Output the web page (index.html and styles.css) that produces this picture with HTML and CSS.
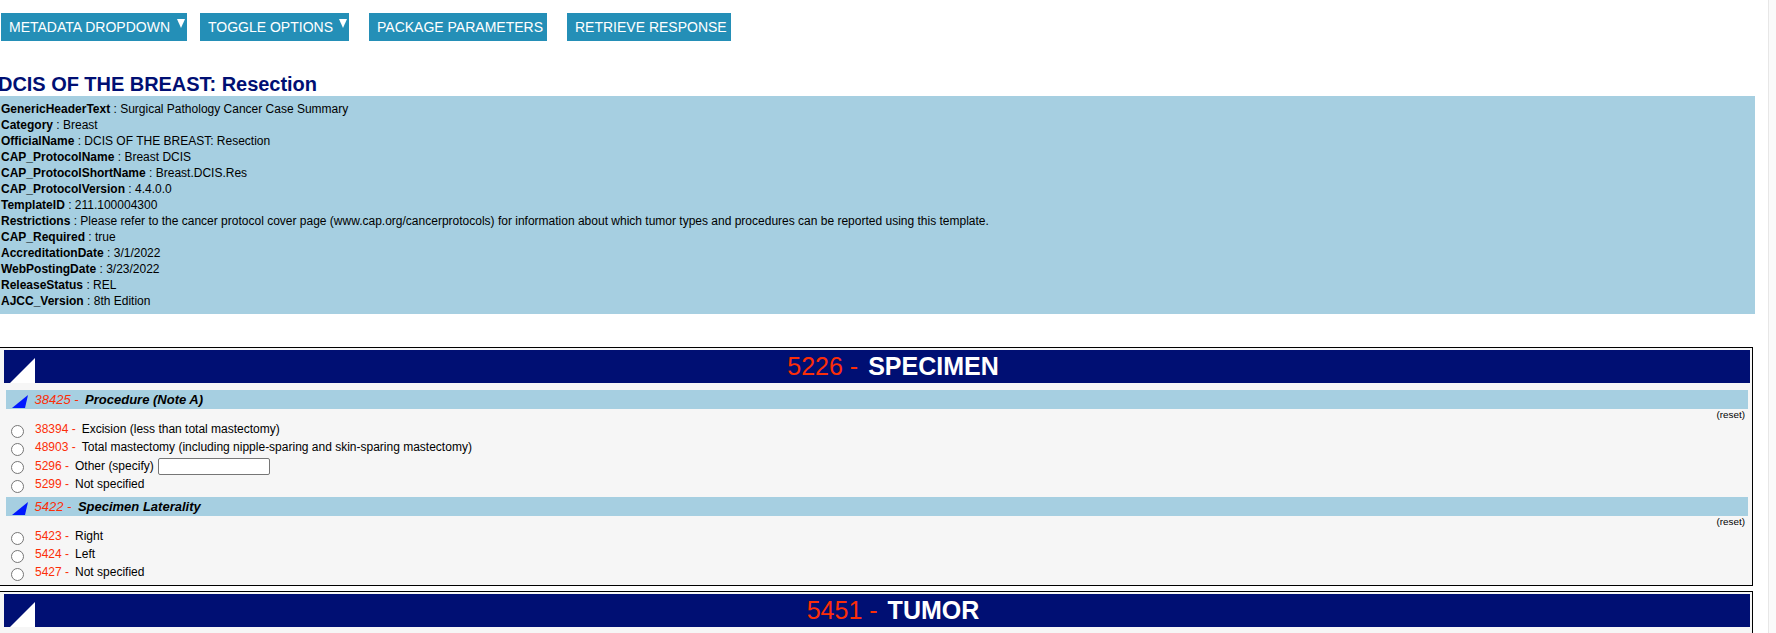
FILE: index.html
```html
<!DOCTYPE html>
<html lang="en">
<head>
<meta charset="utf-8">
<title>DCIS OF THE BREAST: Resection</title>
<link rel="stylesheet" href="styles.css">
</head>
<body>
<div class="page">
<main class="content">
<nav class="menu">
<button class="btn btn-meta"><span>METADATA DROPDOWN</span><svg class="caret" viewBox="0 0 8 9"><path d="M0 0H8L4 9Z" fill="#fff"/></svg></button>
<button class="btn btn-toggle"><span>TOGGLE OPTIONS</span><svg class="caret" viewBox="0 0 8 9"><path d="M0 0H8L4 9Z" fill="#fff"/></svg></button>
<button class="btn btn-package"><span>PACKAGE PARAMETERS</span></button>
<button class="btn btn-retrieve"><span>RETRIEVE RESPONSE</span></button>
</nav>
<h1 class="title">DCIS OF THE BREAST: Resection</h1>
<div class="meta">
<div><b>GenericHeaderText</b> : Surgical Pathology Cancer Case Summary</div>
<div><b>Category</b> : Breast</div>
<div><b>OfficialName</b> : DCIS OF THE BREAST: Resection</div>
<div><b>CAP_ProtocolName</b> : Breast DCIS</div>
<div><b>CAP_ProtocolShortName</b> : Breast.DCIS.Res</div>
<div><b>CAP_ProtocolVersion</b> : 4.4.0.0</div>
<div><b>TemplateID</b> : 211.100004300</div>
<div><b>Restrictions</b> : Please refer to the cancer protocol cover page (www.cap.org/cancerprotocols) for information about which tumor types and procedures can be reported using this template.</div>
<div><b>CAP_Required</b> : true</div>
<div><b>AccreditationDate</b> : 3/1/2022</div>
<div><b>WebPostingDate</b> : 3/23/2022</div>
<div><b>ReleaseStatus</b> : REL</div>
<div><b>AJCC_Version</b> : 8th Edition</div>
</div>
<section class="section">
<header class="section-head"><svg class="fold" viewBox="0 0 25 25"><path d="M0 25L25 0V25Z" fill="#fff"/></svg><h2><span class="code">5226 -</span><b>SPECIMEN</b></h2></header>
<div class="question"><svg class="tri" viewBox="0 0 16 13"><path d="M0 13L16 0L13 13Z" fill="#0019ff"/></svg><span class="code">38425 -</span><b>Procedure (Note A)</b></div>
<div class="reset">(reset)</div>
<div class="answers">
<label class="answer"><input type="radio" name="procedure"><span class="code">38394 -</span><span>Excision (less than total mastectomy)</span></label>
<label class="answer"><input type="radio" name="procedure"><span class="code">48903 -</span><span>Total mastectomy (including nipple-sparing and skin-sparing mastectomy)</span></label>
<label class="answer answer-other"><input type="radio" name="procedure"><span class="code">5296 -</span><span>Other (specify)</span><input class="field" type="text"></label>
<label class="answer"><input type="radio" name="procedure"><span class="code">5299 -</span><span>Not specified</span></label>
</div>
<div class="question question-next"><svg class="tri" viewBox="0 0 16 13"><path d="M0 13L16 0L13 13Z" fill="#0019ff"/></svg><span class="code">5422 -</span><b>Specimen Laterality</b></div>
<div class="reset">(reset)</div>
<div class="answers">
<label class="answer"><input type="radio" name="side"><span class="code">5423 -</span><span>Right</span></label>
<label class="answer"><input type="radio" name="side"><span class="code">5424 -</span><span>Left</span></label>
<label class="answer"><input type="radio" name="side"><span class="code">5427 -</span><span>Not specified</span></label>
</div>
</section>
<section class="section">
<header class="section-head"><svg class="fold" viewBox="0 0 25 25"><path d="M0 25L25 0V25Z" fill="#fff"/></svg><h2><span class="code">5451 -</span><b>TUMOR</b></h2></header>
</section>
</main>
<div class="scroll-track"></div>
</div>
</body>
</html>
```
FILE: styles.css
```css
* { box-sizing: border-box; }
body { margin: 0; background: #fff; font: 12px/16px "Liberation Sans", Arial, sans-serif; color: #000; overflow: hidden; }
.page { display: flex; height: 633px; overflow: hidden; }
.content { flex: 1; min-width: 0; }
.scroll-track { width: 8px; background: #fafafa; border-left: 1px solid #e7e7e7; }
.menu { display: flex; padding: 13px 0 0 1px; }
.btn { display: flex; align-items: flex-start; justify-content: space-between; height: 28px; padding: 0 2px 0 8px; border: 0; background: #248fb7; color: #fff; font: 14px/28px "Liberation Sans", Arial, sans-serif; white-space: nowrap; }
.btn-meta { width: 186px; margin-right: 13px; }
.btn-toggle { width: 149px; margin-right: 20px; }
.btn-package { width: 178px; margin-right: 20px; }
.btn-retrieve { width: 164px; }
.caret { width: 8px; height: 9px; margin-top: 6px; }
.title { margin: 31px 0 0; height: 24px; font-size: 20px; line-height: 24px; color: #000f73; white-space: nowrap; text-indent: -2px; letter-spacing: -0.04px; }
.meta { width: 1755px; height: 218px; padding: 5px 0 0 1px; background: #a6cfe1; margin-bottom: 33px; }
.section { width: 1753px; border: 1px solid #000; border-left: 0; background: #f6f6f6; padding: 2px 2px 2px 4px; margin-bottom: 5px; height: 239px; }
.section-head { display: flex; align-items: flex-end; height: 33px; background: #000f73; padding-left: 6px; }
.fold { width: 25px; height: 25px; }
h2 { flex: 1; margin: 0; padding-left: 1px; text-align: center; font-size: 25px; font-weight: 400; line-height: 34px; height: 34px; color: #fff; }
h2 .code { margin-right: 10px; }
.code { color: #fc2e08; }
.question { display: flex; align-items: flex-start; height: 19px; margin: 7px 2px 0; padding-left: 6px; background: #a6cfe1; font-size: 13px; line-height: 19px; font-style: italic; }
.question-next { margin-top: 3px; }
.tri { width: 16px; height: 13px; margin: 5px 6.5px 0 0; }
.question .code { margin-right: 6.5px; }
.reset { height: 12px; padding-right: 5px; text-align: right; font-size: 9.9px; line-height: 12px; }
.answers { padding: 0 0 0 7px; }
.answer { display: flex; height: 18px; line-height: 16px; }
.answer > input[type="radio"] { appearance: none; width: 13px; height: 13px; margin: 4px 11px 0 0; border: 1px solid #767676; border-radius: 50%; background: #fff; }
.answer .code { margin-right: 6px; }
.answer-other { height: 19px; line-height: 18px; }
.field { width: 112px; height: 17px; margin: 1px 0 0 4px; border: 1px solid #767676; border-radius: 2px; background: #fff; }
```
